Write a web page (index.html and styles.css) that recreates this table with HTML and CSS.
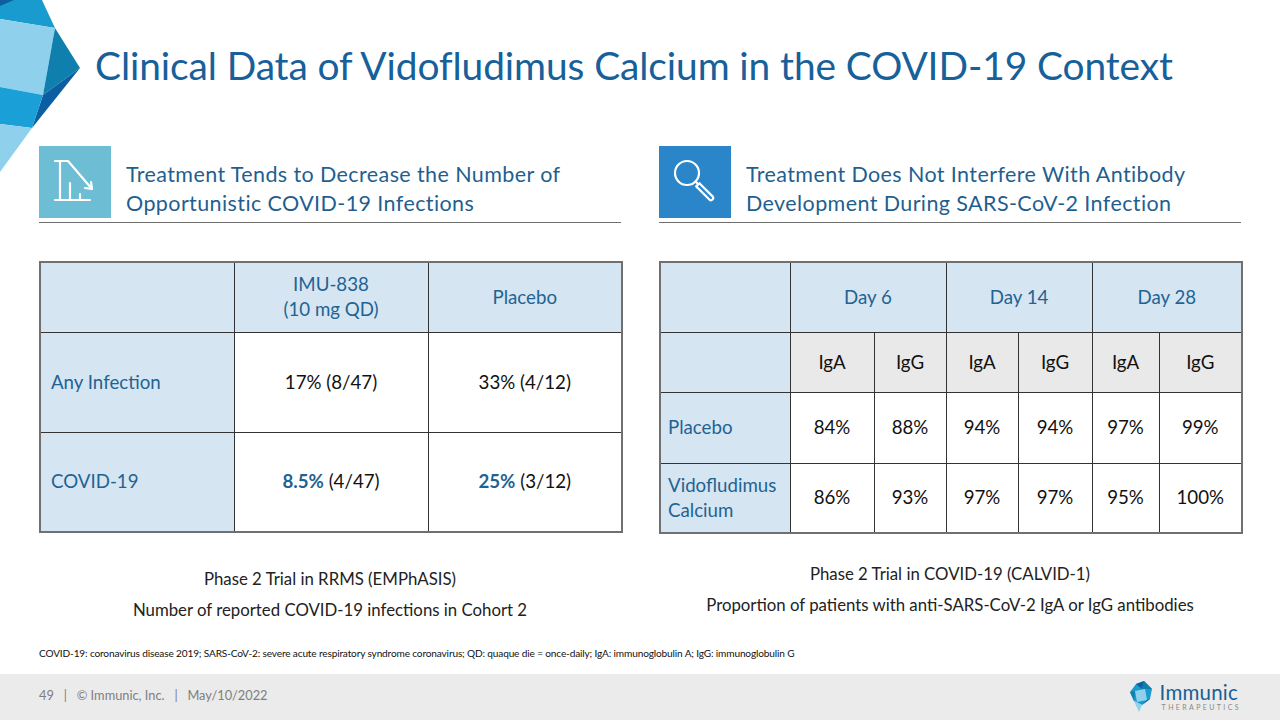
FILE: index.html
```html
<!DOCTYPE html>
<html lang="en">
<head>
<meta charset="utf-8">
<title>Clinical Data of Vidofludimus Calcium in the COVID-19 Context</title>
<link rel="stylesheet" href="styles.css">
</head>
<body>
<div class="slide">
  <svg class="deco" width="100" height="180" viewBox="0 0 100 180" aria-hidden="true">
    <polygon points="0,0 42,0 55,28 0,19" fill="#1a9bd0"/>
    <polygon points="0,0 14,0 0,6" fill="#0d5f9e"/>
    <polygon points="0,19 55,28 43,95 0,87" fill="#8fd1ec"/>
    <polygon points="55,28 80,68 43,95" fill="#0f80ae"/>
    <polygon points="80,68 43,95 32,128" fill="#0c5ea2"/>
    <polygon points="0,87 43,95 32,128 0,124" fill="#1aa0d6"/>
    <polygon points="0,124 32,128 0,172" fill="#8fd1ec"/>
  </svg>

  <h1 class="title">Clinical Data of Vidofludimus Calcium in the COVID-19 Context</h1>

  <div class="main">
    <section class="col">
      <div class="sechead">
        <div class="iconbox teal">
          <svg width="72" height="72" viewBox="0 0 72 72" fill="none" stroke="#fff" stroke-width="2.2" stroke-linecap="round" stroke-linejoin="round">
            <path d="M16 15 H29 L53 43"/>
            <path d="M53 43 L46 42 M53 43 L52 36"/>
            <path d="M21 15 V54"/>
            <path d="M16 54 H51"/>
            <path d="M31 37 V54"/>
            <path d="M41 48 V54"/>
          </svg>
        </div>
        <div class="sectitle">Treatment Tends to Decrease the Number of<br>Opportunistic COVID-19 Infections</div>
      </div>

      <table class="tbl tbl-left">
        <colgroup><col class="c194"><col class="c194"><col class="c194"></colgroup>
        <tr class="r70">
          <th class="lab"></th>
          <th class="hd">IMU-838<br>(10 mg QD)</th>
          <th class="hd">Placebo</th>
        </tr>
        <tr class="r100">
          <th class="lab">Any Infection</th>
          <td>17% (8/47)</td>
          <td>33% (4/12)</td>
        </tr>
        <tr class="r100">
          <th class="lab">COVID-19</th>
          <td><b class="hl">8.5%</b> (4/47)</td>
          <td><b class="hl">25%</b> (3/12)</td>
        </tr>
      </table>

      <div class="caption cap-left">
        <p>Phase 2 Trial in RRMS (EMPhASIS)</p>
        <p>Number of reported COVID-19 infections in Cohort 2</p>
      </div>
    </section>

    <section class="col">
      <div class="sechead">
        <div class="iconbox blue">
          <svg width="72" height="72" viewBox="0 0 72 72" fill="none" stroke="#fff" stroke-width="2.2" stroke-linecap="round" stroke-linejoin="round">
            <circle cx="28" cy="27" r="12"/>
            <path d="M36.5 35.5 L38.5 37.5"/>
            <path d="M37.2 40.4 L40.4 37.2 L53.8 50.6 A2.3 2.3 0 0 1 50.6 53.8 Z"/>
          </svg>
        </div>
        <div class="sectitle">Treatment Does Not Interfere With Antibody<br>Development During SARS-CoV-2 Infection</div>
      </div>

      <table class="tbl tbl-right">
        <colgroup>
          <col style="width:130px"><col style="width:84px"><col style="width:72px"><col style="width:72px"><col style="width:74px"><col style="width:67px"><col style="width:83px">
        </colgroup>
        <tr class="r70">
          <th class="lab"></th>
          <th class="hd" colspan="2">Day 6</th>
          <th class="hd" colspan="2">Day 14</th>
          <th class="hd" colspan="2">Day 28</th>
        </tr>
        <tr class="r60">
          <th class="lab"></th>
          <th class="sub">IgA</th><th class="sub">IgG</th>
          <th class="sub">IgA</th><th class="sub">IgG</th>
          <th class="sub">IgA</th><th class="sub">IgG</th>
        </tr>
        <tr class="r71">
          <th class="lab">Placebo</th>
          <td>84%</td><td>88%</td><td>94%</td><td>94%</td><td>97%</td><td>99%</td>
        </tr>
        <tr class="r70">
          <th class="lab">Vidofludimus Calcium</th>
          <td>86%</td><td>93%</td><td>97%</td><td>97%</td><td>95%</td><td>100%</td>
        </tr>
      </table>

      <div class="caption cap-right">
        <p>Phase 2 Trial in COVID-19 (CALVID-1)</p>
        <p>Proportion of patients with anti-SARS-CoV-2 IgA or IgG antibodies</p>
      </div>
    </section>
  </div>

  <p class="footnote">COVID-19: coronavirus disease 2019; SARS-CoV-2: severe acute respiratory syndrome coronavirus; QD: quaque die = once-daily; IgA: immunoglobulin A; IgG: immunoglobulin G</p>

  <footer class="footer">
    <span class="foot-text">49 &nbsp;&nbsp;| &nbsp;&nbsp;© Immunic, Inc. &nbsp;&nbsp;| &nbsp;&nbsp;May/10/2022</span>
    <div class="logo">
      <svg width="24" height="32" viewBox="0 0 24 32" aria-hidden="true">
        <polygon points="6,3 14,0 22,8 20,18 12,24 4,20 0,11" fill="#1a9bd0"/>
        <polygon points="6,3 14,0 12,8" fill="#0d5f9e"/>
        <polygon points="14,0 22,8 12,8" fill="#0f80ae"/>
        <polygon points="5,10 15,8 17,19 7,21" fill="#8fd1ec"/>
        <polygon points="20,18 12,24 17,19" fill="#0c5ea2"/>
        <polygon points="4,20 12,24 9,31" fill="#8fd1ec"/>
        <polygon points="0,11 5,10 4,20" fill="#0f80ae"/>
      </svg>
      <div class="logo-text">
        <span class="logo-name">Immunic</span>
        <span class="logo-sub">THERAPEUTICS</span>
      </div>
    </div>
  </footer>
</div>
</body>
</html>
```

FILE: styles.css
```css
* { box-sizing: border-box; }
html, body { margin: 0; padding: 0; }
body {
  background: #fff;
  font-family: Lato, "Open Sans", "Noto Sans", sans-serif;
  color: #000;
}
.slide {
  position: relative;
  width: 1280px;
  height: 720px;
  overflow: hidden;
  display: flex;
  flex-direction: column;
}
.deco {
  position: absolute;
  left: 0;
  top: 0;
}
.title {
  margin: 0;
  padding: 41px 0 0 95px;
  height: 146px;
  font-size: 38.9px;
  font-weight: 400;
  color: #17609a;
  line-height: 48px;
  letter-spacing: -0.1px;
}
.main {
  display: grid;
  grid-template-columns: 582px 582px;
  column-gap: 38px;
  padding: 0 39px;
}
.col { display: flex; flex-direction: column; }
.sechead {
  display: flex;
  align-items: flex-start;
  gap: 15px;
  height: 77px;
  border-bottom: 1.5px solid #6f6f6f;
}
.iconbox {
  width: 72px;
  height: 72px;
  flex: none;
}
.iconbox svg { display: block; }
.teal { background: #6dbdd5; }
.blue { background: #2a85c9; }
.sectitle {
  padding-top: 14px;
  font-size: 21.5px;
  letter-spacing: 0.4px;
  line-height: 28.5px;
  color: #1f5f8f;
}
.tbl {
  margin-top: 38px;
  border-collapse: collapse;
  table-layout: fixed;
  width: 582px;
  border: 2px solid #707070;
  font-size: 18.7px;
}
.c194 { width: 194px; }
.tbl th, .tbl td {
  border: 1.2px solid #333;
  text-align: center;
  vertical-align: middle;
  font-weight: 400;
  padding: 0;
  line-height: 25px;
}
.tbl .lab {
  background: #d5e5f2;
  color: #1f6392;
  text-align: left;
  padding-left: 10px;
}
.tbl-right .lab { padding-left: 7px; }
.tbl .hd {
  background: #d5e5f2;
  color: #1f6392;
}
.tbl .sub { background: #e9e9e9; color: #111; }
.tbl td { color: #111; background: #fff; }
.hl { color: #1f6392; font-weight: 700; }
.r70 { height: 70px; }
.r71 { height: 71px; }
.r60 { height: 60px; }
.r100 { height: 100px; }
.caption {
  text-align: center;
  font-size: 16.8px;
  color: #222;
}
.caption p { margin: 0; line-height: 30.5px; }
.cap-left { margin-top: 31px; }
.cap-right { margin-top: 25px; }
.footnote {
  margin: auto 0 0 0;
  padding: 0 0 15px 39px;
  font-size: 10.1px;
  color: #111;
  letter-spacing: -0.15px;
  line-height: 12px;
}
.footer {
  height: 46px;
  background: #ebebeb;
  display: flex;
  align-items: center;
  justify-content: space-between;
  padding: 0 39px 0 39px;
}
.foot-text {
  font-size: 12.8px;
  color: #7f7f7f;
  margin-top: -5px;
}
.logo {
  display: flex;
  align-items: center;
  gap: 6px;
}
.logo svg { display: block; }
.logo-text { display: flex; flex-direction: column; align-items: flex-start; }
.logo-name {
  font-size: 20.5px;
  line-height: 21px;
  color: #1a5f96;
  letter-spacing: 0.2px;
}
.logo-sub {
  font-size: 7px;
  line-height: 9px;
  color: #8a8a8a;
  letter-spacing: 2.4px;
  margin-left: 2px;
}
```
